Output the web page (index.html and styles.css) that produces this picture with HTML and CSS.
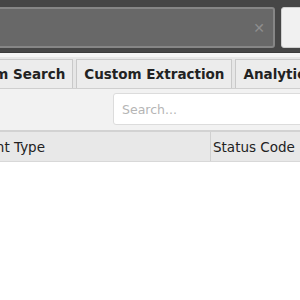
FILE: index.html
```html
<!DOCTYPE html>
<html>
<head>
<meta charset="utf-8">
<link rel="stylesheet" href="styles.css">
</head>
<body>
<div class="topbar">
  <div class="urlfield"><span class="clear">✕</span></div>
  <div class="btn"></div>
</div>
<div class="tabstrip">
  <div class="tab">Custom Search</div>
  <div class="tab">Custom Extraction</div>
  <div class="tab">Analytics</div>
</div>
<div class="filterbar">
  <div class="search">Search...</div>
</div>
<div class="header">
  <div class="col col-type">Content Type</div>
  <div class="col col-status">Status Code</div>
</div>
<div class="body"></div>
</body>
</html>
```
FILE: styles.css
```css
html, body { margin: 0; padding: 0; width: 300px; height: 300px; overflow: hidden; background: #fff; font-family: "DejaVu Sans", "Liberation Sans", sans-serif; }
.topbar { height: 53px; background: #464646; display: flex; align-items: flex-start; padding-top: 7px; box-sizing: border-box; border-bottom: 1px solid #3a3a3a; }
.urlfield { flex: none; margin-left: -10px; width: 285px; height: 41px; box-sizing: border-box; background: #686868; border: 2px solid #868686; border-radius: 3px; display: flex; align-items: center; justify-content: flex-end; padding-right: 8px; }
.clear { color: #8e8e8e; font-size: 14px; font-weight: bold; }
.btn { flex: none; margin-left: 6px; width: 30px; height: 41px; box-sizing: border-box; background: #f1f1f1; border: 1px solid #d0d0d0; border-radius: 3px; }
.tabstrip { height: 36px; background: #e6e6e6; border-top: 4px solid #f4f4f4; box-sizing: border-box; display: flex; align-items: stretch; padding-top: 2px; margin-left: -57px; gap: 3px; border-bottom: 1px solid #cfcfcf; }
.tab { flex: none; font-weight: bold; font-size: 13.5px; color: #222; padding: 0 7px; display: flex; align-items: center; background: #ececec; border: 1px solid #c9c9c9; border-bottom: none; white-space: nowrap; }
.filterbar { height: 43px; background: #f2f2f2; display: flex; justify-content: flex-end; padding-top: 4px; box-sizing: border-box; border-bottom: 2px solid #d2d2d2; }
.search { flex: none; width: 195px; margin-right: -8px; height: 32px; box-sizing: border-box; background: #fff; border: 1px solid #dcdcdc; border-radius: 3px; font-size: 12.5px; color: #b5b5b5; padding-left: 8px; display: flex; align-items: center; }
.header { height: 29px; background: #e8e8e8; display: flex; border-bottom: 1px solid #d8d8d8; margin-left: -48px; }
.col { flex: none; font-size: 13.5px; color: #222; display: flex; align-items: center; padding-left: 4px; white-space: nowrap; }
.col-type { width: 259px; border-right: 1px solid #d0d0d0; box-sizing: border-box; }
.col-status { padding-left: 2px; }
```
